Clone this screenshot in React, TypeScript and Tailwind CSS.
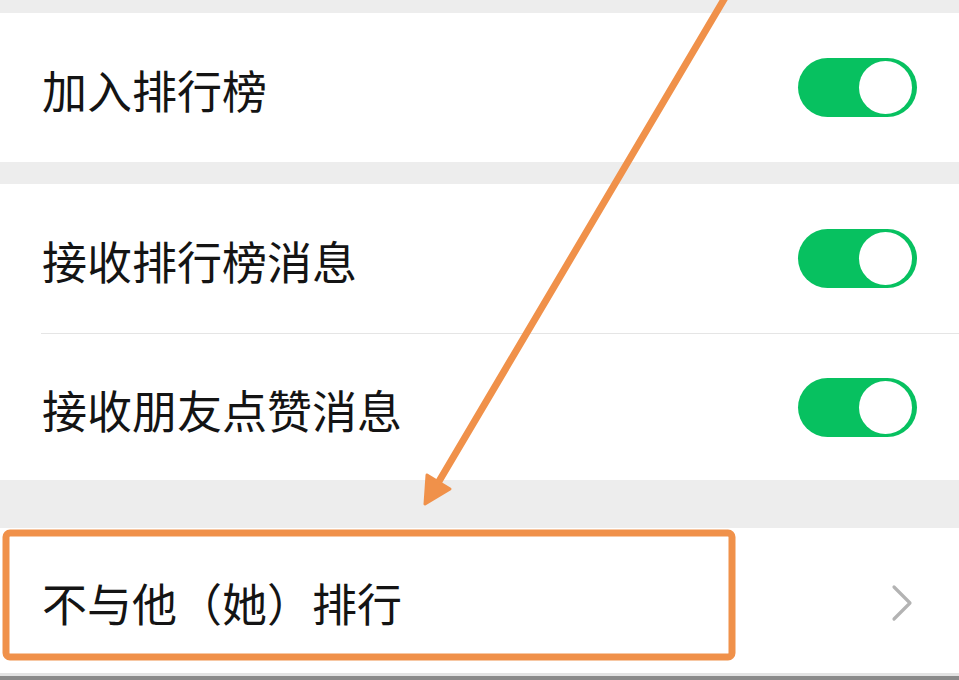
const FONT = { fontFamily: '"Noto Sans CJK SC", "Noto Sans", sans-serif' };

function Toggle() {
  return (
    <div className="w-[119px] h-[59px] rounded-full bg-[#07c160] flex items-center justify-end pr-[5px] shrink-0">
      <div className="w-[53px] h-[53px] rounded-full bg-white" />
    </div>
  );
}

function SwitchRow({ label, height }: { label: string; height: string }) {
  return (
    <div className={`flex items-center justify-between pl-[42px] pr-[42px] ${height}`}>
      <span className="text-[45px] leading-none text-[#141414] pt-[4px]">{label}</span>
      <Toggle />
    </div>
  );
}

export default function App() {
  return (
    <div
      className="relative w-[959px] h-[680px] overflow-hidden bg-[#ededed] flex flex-col pt-[13px]"
      style={FONT}
    >
      <div className="bg-white">
        <SwitchRow label="加入排行榜" height="h-[149px]" />
      </div>

      <div className="bg-white mt-[22px]">
        <SwitchRow label="接收排行榜消息" height="h-[149px]" />
        <div className="ml-[41px] h-px bg-[#e5e5e5]" />
        <SwitchRow label="接收朋友点赞消息" height="h-[146px]" />
      </div>

      <div className="bg-white mt-[48px] h-[145px] flex items-center justify-between pl-[42px] pr-[46px]">
        <span className="text-[45px] leading-none text-[#141414] pt-[4px]">不与他（她）排行</span>
        <svg width={22} height={38} viewBox="0 0 22 38" className="mt-[4px]">
          <polyline
            points="3,3 19,19 3,35"
            fill="none"
            stroke="#b3b3b3"
            strokeWidth={3.2}
            strokeLinecap="round"
            strokeLinejoin="round"
          />
        </svg>
      </div>

      <div className="h-[3px] bg-[#e3e3e3]" />
      <div className="flex-1 bg-[#8a8a8a]" />

      {/* annotation overlay */}
      <svg
        className="absolute inset-0 pointer-events-none"
        width={959}
        height={680}
        viewBox="0 0 959 680"
      >
        <line x1={726} y1={-4} x2={438} y2={483} stroke="#f0914a" strokeWidth={7} strokeLinecap="round" />
        <polygon points="425,504 427,475 450,489" fill="#f0914a" stroke="#f0914a" strokeWidth={3} strokeLinejoin="round" />
        <rect x={6} y={533} width={726} height={124} rx={4} fill="none" stroke="#f0914a" strokeWidth={7} />
      </svg>
    </div>
  );
}
